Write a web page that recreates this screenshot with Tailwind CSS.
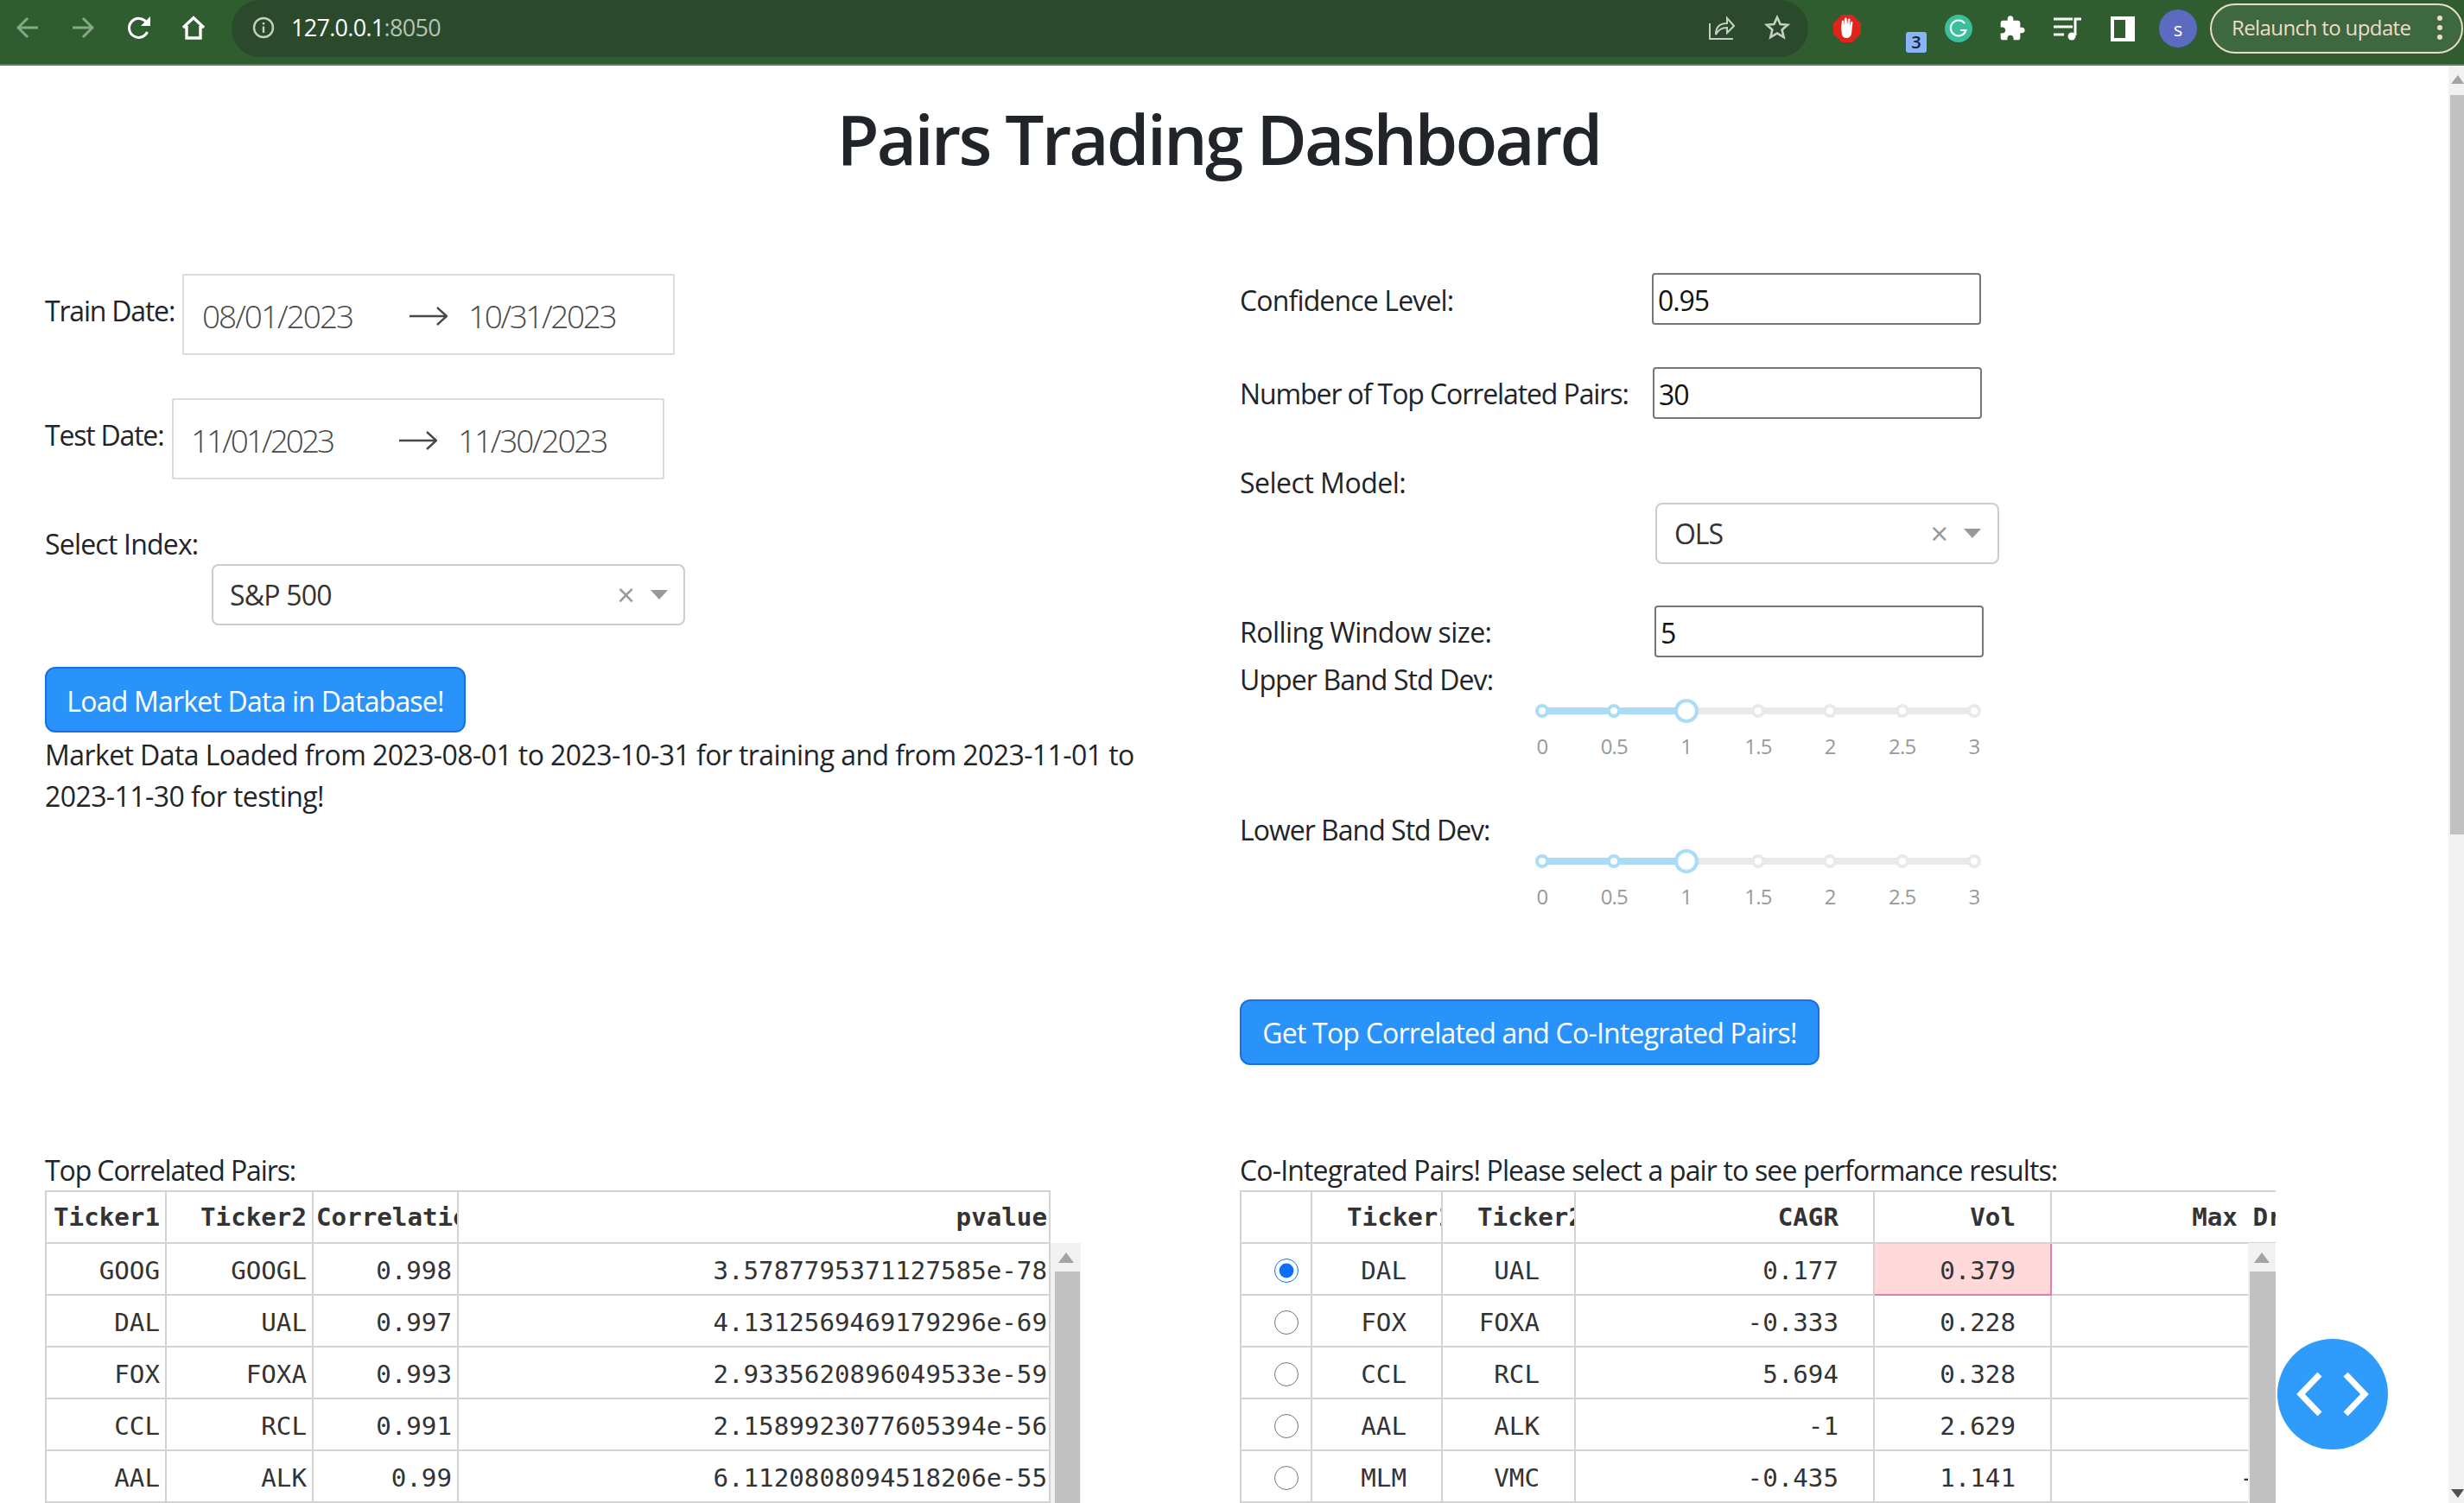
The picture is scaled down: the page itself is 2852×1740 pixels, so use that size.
<!DOCTYPE html>
<html lang="en">
<head>
    <meta charset="UTF-8">
    <title>Pairs Trading Dashboard</title>
    <script src="https://cdn.jsdelivr.net/npm/@tailwindcss/browser@4"></script>
</head>
<body class="bg-white text-[#212529] font-['Open_Sans',sans-serif] overflow-hidden">
<div class="w-[2852px] h-[1740px] flex flex-col overflow-hidden">

    <!-- browser toolbar -->
    <header class="h-[76px] shrink-0 bg-[#2f5d2f] border-b-2 border-[#5b7f5b] flex items-start">
        <div class="w-[268px] h-[64px] shrink-0 flex items-center pl-[19px]">
            <svg class="w-[26px] h-[26px] mr-[38px]" viewBox="0 0 26 26" fill="none" stroke="#86a888" stroke-width="3"><path d="M25 13H2M13 2L2 13l11 11"/></svg>
            <svg class="w-[26px] h-[26px] mr-[38px]" viewBox="0 0 26 26" fill="none" stroke="#86a888" stroke-width="3"><path d="M1 13h23M13 2l11 11-11 11"/></svg>
            <svg class="w-[28px] h-[28px] mr-[35px]" viewBox="0 0 28 28"><path d="M23.500 19a11 11 0 1 1-1-11" fill="none" stroke="#fff" stroke-width="3"/><path d="M27 1v11H16z" fill="#fff"/></svg>
            <svg class="w-[28px] h-[28px]" viewBox="0 0 28 28" fill="none" stroke="#fff" stroke-width="3.400"><path d="M2 14L14 2.500 26 14M6 12v14h16V12"/></svg>
        </div>
        <div class="w-[1825px] h-[66px] shrink-0 bg-[#2b4a2b] rounded-r-[33px] rounded-l-[33px] flex items-center pl-[24px] pr-[21px] pb-[2px]">
            <svg class="w-[26px] h-[26px] mr-[19px]" viewBox="0 0 26 26" fill="none" stroke="#c4d0c4" stroke-width="2.400"><circle cx="13" cy="13" r="11"/><path d="M13 11.500V19M13 7v2.600"/></svg>
            <div class="text-[27px] tracking-[-.7px] text-white">127.0.0.1<span class="text-[#b4c4b4]">:8050</span></div>
            <svg class="w-[30px] h-[30px] ml-auto mr-[34px]" viewBox="0 0 30 30" fill="none" stroke="#c4d0c4" stroke-width="2"><path d="M1 10v18h27M8 23c0-9 5-13 13-13V4l8 9-8 8v-6c-6 0-10 2-13 8z"/></svg>
            <svg class="w-[30px] h-[30px]" viewBox="0 0 30 30" fill="none" stroke="#c4d0c4" stroke-width="2.600"><path d="M15 3l3.600 8 8.400.8-6.400 5.600 2 8.600-7.600-4.500L7.400 26l2-8.600L3 11.800l8.400-.8z"/></svg>
        </div>
        <div class="flex-1 h-[66px] relative flex items-center">
            <svg class="w-[32px] h-[32px] ml-[29px]" viewBox="0 0 32 32"><path d="M10 0h12l10 10v12L22 32H10L0 22V10z" fill="#e0241c"/><path d="M9 15l1-8q1.500-1 2 0l.5 5 .5-8q1.500-1 2.500 0l.5 8 1-7q1.500-1 2.500 0l-.5 8 1.500-5q1.500-.5 2 .5L21 22q-1 5-6 5-4 0-5-4z" fill="#fff"/></svg>
            <div class="w-[24px] h-[24px] rounded-[3px] bg-[#8ab4f8] mt-[32px] ml-[52px] flex items-center justify-center text-[20px] font-semibold text-[#1a2233]">3</div>
            <svg class="w-[32px] h-[32px] ml-[21px]" viewBox="0 0 32 32"><circle cx="16" cy="16" r="16" fill="#3bbf9b"/><path d="M23 10a9 9 0 1 0 1.500 8H18" fill="none" stroke="#fff" stroke-width="2.200"/></svg>
            <svg class="w-[32px] h-[32px] ml-[30px]" viewBox="0 0 24 24" fill="#fff"><path d="M20.500 11H19V7c0-1.100-.9-2-2-2h-4V3.500C13 2.120 11.880 1 10.500 1S8 2.120 8 3.500V5H4c-1.100 0-1.990.9-1.990 2v3.800H3.500c1.490 0 2.700 1.210 2.700 2.700s-1.210 2.700-2.700 2.700H2V20c0 1.100.9 2 2 2h3.800v-1.500c0-1.490 1.210-2.700 2.700-2.700 1.490 0 2.700 1.210 2.700 2.700V22H17c1.100 0 2-.9 2-2v-4h1.500c1.380 0 2.500-1.120 2.500-2.500S21.880 11 20.500 11z"/></svg>
            <svg class="w-[32px] h-[28px] ml-[32px]" viewBox="0 0 32 28" fill="none" stroke="#fff" stroke-width="3"><path d="M0 3h22M0 12h22M0 21h12M25 22V3h7"/><circle cx="21" cy="23" r="4.500" fill="#fff" stroke="none"/></svg>
            <div class="w-[28px] h-[29px] ml-[34px] border-[4px] border-r-[11px] border-white"></div>
            <div class="w-[44px] h-[44px] ml-[28px] rounded-full bg-[#5c6bc0] flex items-center justify-center text-[22px] text-white">s</div>
            <div class="w-[293px] h-[58px] ml-[15px] rounded-[29px] border-2 border-[#ecd9c6] bg-[#3e6840] flex items-center pl-[23px] pb-[2px] text-[24px] tracking-[-.6px] text-[#f0dcc8] whitespace-nowrap shrink-0">
                Relaunch to update
                <svg class="w-[8px] h-[30px] ml-[30px]" viewBox="0 0 8 30" fill="#f0dcc8"><circle cx="4" cy="4" r="3"/><circle cx="4" cy="15" r="3"/><circle cx="4" cy="26" r="3"/></svg>
            </div>
        </div>
    </header>

    <div class="relative flex-1 overflow-hidden">
        <main class="w-[2834px]">
            <h1 class="mt-[36px] text-center text-[80px] leading-[96px] font-semibold tracking-[-2.900px] pr-[13px]">Pairs Trading Dashboard</h1>

            <div class="mt-[108px] grid grid-cols-[1383px_1199px] pl-[52px] text-[32px] leading-[48px] tracking-[-1.100px]">
                <!-- left form -->
                <section>
                    <div class="flex items-start mt-[1px]">
                        <label class="w-[159px] mt-[19px] shrink-0 tracking-[-1.200px]">Train Date:</label>
                        <div class="w-[570px] h-[94px] border-2 border-[#dbdbdb] rounded-[2px] flex items-center pl-[21px] pt-[4px] text-[37px] font-light text-[#484848]">
                            <span class="w-[240px] tracking-[-2px]">08/01/2023</span>
                            <svg class="w-[44px] h-[24px] mr-[24px]" viewBox="0 0 44 24" fill="none" stroke="#484848" stroke-width="2.400"><path d="M0 12h43M32 2l11 10-11 10"/></svg>
                            <span class="tracking-[-2.400px]">10/31/2023</span>
                        </div>
                    </div>
                    <div class="flex items-start mt-[50px]">
                        <label class="w-[147px] mt-[19px] shrink-0 tracking-[-1.200px]">Test Date:</label>
                        <div class="w-[570px] h-[94px] border-2 border-[#dbdbdb] rounded-[2px] flex items-center pl-[20px] pt-[4px] text-[37px] font-light text-[#484848]">
                            <span class="w-[241px] tracking-[-3px]">11/01/2023</span>
                            <svg class="w-[44px] h-[24px] mr-[24px]" viewBox="0 0 44 24" fill="none" stroke="#484848" stroke-width="2.400"><path d="M0 12h43M32 2l11 10-11 10"/></svg>
                            <span class="tracking-[-2.200px]">11/30/2023</span>
                        </div>
                    </div>
                    <div class="mt-[51px] tracking-[-.8px]">Select Index:</div>
                    <div class="-mt-[1px] ml-[193px] w-[548px] h-[71px] border-2 border-[#ccc] rounded-[8px] flex items-center pl-[19px] pr-[18px] text-[#333] tracking-[-.8px]">
                        <span>S&amp;P 500</span>
                        <span class="ml-auto text-[36px] leading-none text-[#999] mr-[19px]">×</span>
                        <svg class="w-[20px] h-[12px]" viewBox="0 0 20 12" fill="#999"><path d="M0 0h20L10 11z"/></svg>
                    </div>
                    <button class="mt-[48px] block w-[487px] h-[76px] pt-[3px] bg-[#2a93fb] border-2 border-[#1a6fe8] rounded-[12px] text-white tracking-[-.8px]">Load Market Data in Database!</button>
                    <p class="mt-[2px] w-[1290px] tracking-[-.58px]">Market Data Loaded from 2023-08-01 to 2023-10-31 for training and from 2023-11-01 to 2023-11-30 for testing!</p>
                </section>

                <!-- right form -->
                <section>
                    <div class="flex items-start">
                        <label class="w-[477px] mt-[8px] shrink-0 tracking-[-.85px]">Confidence Level:</label>
                        <input class="w-[381px] h-[60px] border-2 border-[#767676] rounded-[4px] px-[5px] pt-[2px] text-[#111]" value="0.95">
                    </div>
                    <div class="flex items-start mt-[49px]">
                        <label class="w-[478px] mt-[7px] shrink-0">Number of Top Correlated Pairs:</label>
                        <input class="w-[381px] h-[60px] border-2 border-[#767676] rounded-[4px] px-[5px] pt-[2px] text-[#111]" value="30">
                    </div>
                    <div class="mt-[50px] tracking-[-.5px]">Select Model:</div>
                    <div class="-mt-[1px] ml-[481px] w-[398px] h-[71px] border-2 border-[#ccc] rounded-[8px] flex items-center pl-[20px] pr-[19px] text-[#333]">
                        <span>OLS</span>
                        <span class="ml-auto text-[36px] leading-none text-[#999] mr-[19px]">×</span>
                        <svg class="w-[20px] h-[12px]" viewBox="0 0 20 12" fill="#999"><path d="M0 0h20L10 11z"/></svg>
                    </div>
                    <div class="flex items-start mt-[48px]">
                        <label class="w-[480px] mt-[7px] shrink-0 tracking-[-.55px]">Rolling Window size:</label>
                        <input class="w-[381px] h-[60px] border-2 border-[#767676] rounded-[4px] px-[5px] pt-[2px] text-[#111]" value="5">
                    </div>
                    <div class="mt-[2px] tracking-[-.9px]">Upper Band Std Dev:</div>
                    <div class="relative -mt-[2px] ml-[336px] w-[528px] flex justify-between text-[24px] leading-[30px] tracking-[-.8px] text-[#999]">
                        <div class="absolute left-[14px] top-[10px] w-[500px] h-[8px] bg-[#e9e9e9]"></div>
                        <div class="absolute left-[14px] top-[10px] w-[167px] h-[8px] bg-[#a9dcf6]"></div>
                        <div class="relative w-[28px] flex flex-col items-center"><div class="h-[28px] flex items-center"><div class="w-[16px] h-[16px] rounded-full bg-white border-[4px] border-[#a9dcf6]"></div></div><span class="mt-[12px] whitespace-nowrap">0</span></div>
                        <div class="relative w-[28px] flex flex-col items-center"><div class="h-[28px] flex items-center"><div class="w-[16px] h-[16px] rounded-full bg-white border-[4px] border-[#a9dcf6]"></div></div><span class="mt-[12px] whitespace-nowrap">0.5</span></div>
                        <div class="relative w-[28px] flex flex-col items-center"><div class="w-[28px] h-[28px] rounded-full bg-white border-[4px] border-[#a9dcf6]"></div><span class="mt-[12px] whitespace-nowrap">1</span></div>
                        <div class="relative w-[28px] flex flex-col items-center"><div class="h-[28px] flex items-center"><div class="w-[16px] h-[16px] rounded-full bg-white border-[4px] border-[#e9e9e9]"></div></div><span class="mt-[12px] whitespace-nowrap">1.5</span></div>
                        <div class="relative w-[28px] flex flex-col items-center"><div class="h-[28px] flex items-center"><div class="w-[16px] h-[16px] rounded-full bg-white border-[4px] border-[#e9e9e9]"></div></div><span class="mt-[12px] whitespace-nowrap">2</span></div>
                        <div class="relative w-[28px] flex flex-col items-center"><div class="h-[28px] flex items-center"><div class="w-[16px] h-[16px] rounded-full bg-white border-[4px] border-[#e9e9e9]"></div></div><span class="mt-[12px] whitespace-nowrap">2.5</span></div>
                        <div class="relative w-[28px] flex flex-col items-center"><div class="h-[28px] flex items-center"><div class="w-[16px] h-[16px] rounded-full bg-white border-[4px] border-[#e9e9e9]"></div></div><span class="mt-[12px] whitespace-nowrap">3</span></div>
                    </div>
                    <div class="mt-[58px] tracking-[-1px]">Lower Band Std Dev:</div>
                    <div class="relative -mt-[2px] ml-[336px] w-[528px] flex justify-between text-[24px] leading-[30px] tracking-[-.8px] text-[#999]">
                        <div class="absolute left-[14px] top-[10px] w-[500px] h-[8px] bg-[#e9e9e9]"></div>
                        <div class="absolute left-[14px] top-[10px] w-[167px] h-[8px] bg-[#a9dcf6]"></div>
                        <div class="relative w-[28px] flex flex-col items-center"><div class="h-[28px] flex items-center"><div class="w-[16px] h-[16px] rounded-full bg-white border-[4px] border-[#a9dcf6]"></div></div><span class="mt-[12px] whitespace-nowrap">0</span></div>
                        <div class="relative w-[28px] flex flex-col items-center"><div class="h-[28px] flex items-center"><div class="w-[16px] h-[16px] rounded-full bg-white border-[4px] border-[#a9dcf6]"></div></div><span class="mt-[12px] whitespace-nowrap">0.5</span></div>
                        <div class="relative w-[28px] flex flex-col items-center"><div class="w-[28px] h-[28px] rounded-full bg-white border-[4px] border-[#a9dcf6]"></div><span class="mt-[12px] whitespace-nowrap">1</span></div>
                        <div class="relative w-[28px] flex flex-col items-center"><div class="h-[28px] flex items-center"><div class="w-[16px] h-[16px] rounded-full bg-white border-[4px] border-[#e9e9e9]"></div></div><span class="mt-[12px] whitespace-nowrap">1.5</span></div>
                        <div class="relative w-[28px] flex flex-col items-center"><div class="h-[28px] flex items-center"><div class="w-[16px] h-[16px] rounded-full bg-white border-[4px] border-[#e9e9e9]"></div></div><span class="mt-[12px] whitespace-nowrap">2</span></div>
                        <div class="relative w-[28px] flex flex-col items-center"><div class="h-[28px] flex items-center"><div class="w-[16px] h-[16px] rounded-full bg-white border-[4px] border-[#e9e9e9]"></div></div><span class="mt-[12px] whitespace-nowrap">2.5</span></div>
                        <div class="relative w-[28px] flex flex-col items-center"><div class="h-[28px] flex items-center"><div class="w-[16px] h-[16px] rounded-full bg-white border-[4px] border-[#e9e9e9]"></div></div><span class="mt-[12px] whitespace-nowrap">3</span></div>
                    </div>
                    <button class="mt-[104px] block w-[671px] h-[76px] pt-[2px] bg-[#2a93fb] border-2 border-[#1a6fe8] rounded-[12px] text-white tracking-[-.8px]">Get Top Correlated and Co-Integrated Pairs!</button>
                </section>

                <!-- top correlated table -->
                <section class="mt-[98px]">
                    <div>Top Correlated Pairs:</div>
                    <div class="relative -mt-[1px] w-[1199px] h-[400px] overflow-hidden font-['DejaVu_Sans_Mono',monospace] text-[29.2px] tracking-normal text-[#333]">
                        <table class="w-[1164px] table-fixed border-collapse text-right [&_td]:h-[60px] [&_td]:border-2 [&_td]:border-[#d3d3d3] [&_td]:pr-[6px] [&_td]:pt-[4px] [&_td:last-child]:pr-[2px] [&_th]:h-[60px] [&_th]:border-2 [&_th]:border-[#d3d3d3] [&_th]:pl-[3px] [&_th]:pr-[6px] [&_th:last-child]:pr-[2px] [&_th]:overflow-hidden [&_th]:whitespace-nowrap">
                            <colgroup><col class="w-[139px]"><col class="w-[170px]"><col class="w-[168px]"><col></colgroup>
                            <thead>
                                <tr><th>Ticker1</th><th>Ticker2</th><th>Correlation</th><th>pvalue</th></tr>
                            </thead>
                            <tbody>
                                <tr><td>GOOG</td><td>GOOGL</td><td>0.998</td><td>3.5787795371127585e-78</td></tr>
                                <tr><td>DAL</td><td>UAL</td><td>0.997</td><td>4.1312569469179296e-69</td></tr>
                                <tr><td>FOX</td><td>FOXA</td><td>0.993</td><td>2.9335620896049533e-59</td></tr>
                                <tr><td>CCL</td><td>RCL</td><td>0.991</td><td>2.1589923077605394e-56</td></tr>
                                <tr><td>AAL</td><td>ALK</td><td>0.99</td><td>6.1120808094518206e-55</td></tr>
                            </tbody>
                        </table>
                        <div class="absolute left-[1164px] top-[61px] bottom-0 w-[35px] bg-[#f1f1f1]">
                            <svg class="w-[18px] h-[12px] mx-auto mt-[11px]" viewBox="0 0 18 12" fill="#a3a3a3"><path d="M9 0l9 12H0z"/></svg>
                            <div class="absolute left-[5px] right-[1px] top-[33px] bottom-0 bg-[#c1c1c1]"></div>
                        </div>
                    </div>
                </section>

                <!-- co-integrated table -->
                <section class="mt-[98px]">
                    <div class="tracking-[-.85px]">Co-Integrated Pairs! Please select a pair to see performance results:</div>
                    <div class="relative -mt-[1px] w-[1199px] h-[400px] overflow-hidden font-['DejaVu_Sans_Mono',monospace] text-[29.2px] tracking-normal text-[#333]">
                        <table class="w-[1355px] table-fixed border-collapse text-right [&_td]:h-[60px] [&_td]:border-2 [&_td]:border-[#d3d3d3] [&_td]:pr-[40px] [&_td]:pt-[4px] [&_th]:h-[60px] [&_th]:border-2 [&_th]:border-[#d3d3d3] [&_th]:pl-[40px] [&_th]:pr-[40px] [&_th]:overflow-hidden [&_th]:whitespace-nowrap">
                            <colgroup><col class="w-[82px]"><col class="w-[151px]"><col class="w-[154px]"><col class="w-[346px]"><col class="w-[205px]"><col></colgroup>
                            <thead>
                                <tr><th></th><th>Ticker1</th><th>Ticker2</th><th>CAGR</th><th>Vol</th><th>Max Drawdown</th></tr>
                            </thead>
                            <tbody>
                                <tr><td class="text-center !pr-0 !pt-0 pl-[24px]"><input type="radio" name="pair" checked class="w-[28px] h-[28px] align-middle accent-[#0d6efd]"></td><td>DAL</td><td>UAL</td><td>0.177</td><td class="bg-[#ffd9d9] !border-[#e07fae]">0.379</td><td></td></tr>
                                <tr><td class="text-center !pr-0 !pt-0 pl-[24px]"><input type="radio" name="pair" class="w-[28px] h-[28px] align-middle"></td><td>FOX</td><td>FOXA</td><td>-0.333</td><td>0.228</td><td></td></tr>
                                <tr><td class="text-center !pr-0 !pt-0 pl-[24px]"><input type="radio" name="pair" class="w-[28px] h-[28px] align-middle"></td><td>CCL</td><td>RCL</td><td>5.694</td><td>0.328</td><td></td></tr>
                                <tr><td class="text-center !pr-0 !pt-0 pl-[24px]"><input type="radio" name="pair" class="w-[28px] h-[28px] align-middle"></td><td>AAL</td><td>ALK</td><td>-1</td><td>2.629</td><td></td></tr>
                                <tr><td class="text-center !pr-0 !pt-0 pl-[24px]"><input type="radio" name="pair" class="w-[28px] h-[28px] align-middle"></td><td>MLM</td><td>VMC</td><td>-0.435</td><td>1.141</td><td class="!pr-[178px]">-</td></tr>
                            </tbody>
                        </table>
                        <div class="absolute right-0 top-[61px] bottom-0 w-[32px] bg-[#f1f1f1]">
                            <svg class="w-[18px] h-[12px] mx-auto mt-[11px]" viewBox="0 0 18 12" fill="#a3a3a3"><path d="M9 0l9 12H0z"/></svg>
                            <div class="absolute left-[2px] right-0 top-[33px] bottom-0 bg-[#c1c1c1]"></div>
                        </div>
                    </div>
                </section>
            </div>
        </main>

        <!-- page scrollbar -->
        <div class="absolute right-0 top-0 bottom-0 w-[18px] bg-[#f1f1f1]">
            <svg class="absolute left-[3px] top-[11px] w-[15px] h-[10px]" viewBox="0 0 15 10" fill="#a3a3a3"><path d="M8 0l7 10H0z"/></svg>
            <div class="absolute left-[2px] right-0 top-[34px] h-[856px] bg-[#c1c1c1]"></div>
            <svg class="absolute left-[3px] bottom-[6px] w-[15px] h-[10px]" viewBox="0 0 15 10" fill="#505050"><path d="M0 0h15L8 10z"/></svg>
        </div>

        <!-- floating dev tools button -->
        <div class="absolute left-[2636px] top-[1474px] w-[128px] h-[128px] rounded-full bg-[#2f9bfb] flex items-center justify-center">
            <svg class="w-[86px] h-[50px]" viewBox="0 0 86 50" fill="none" stroke="#fff" stroke-width="7"><path d="M28 2L6 25l22 23M58 2l22 23-22 23"/></svg>
        </div>
    </div>
</div>
</body>
</html>
